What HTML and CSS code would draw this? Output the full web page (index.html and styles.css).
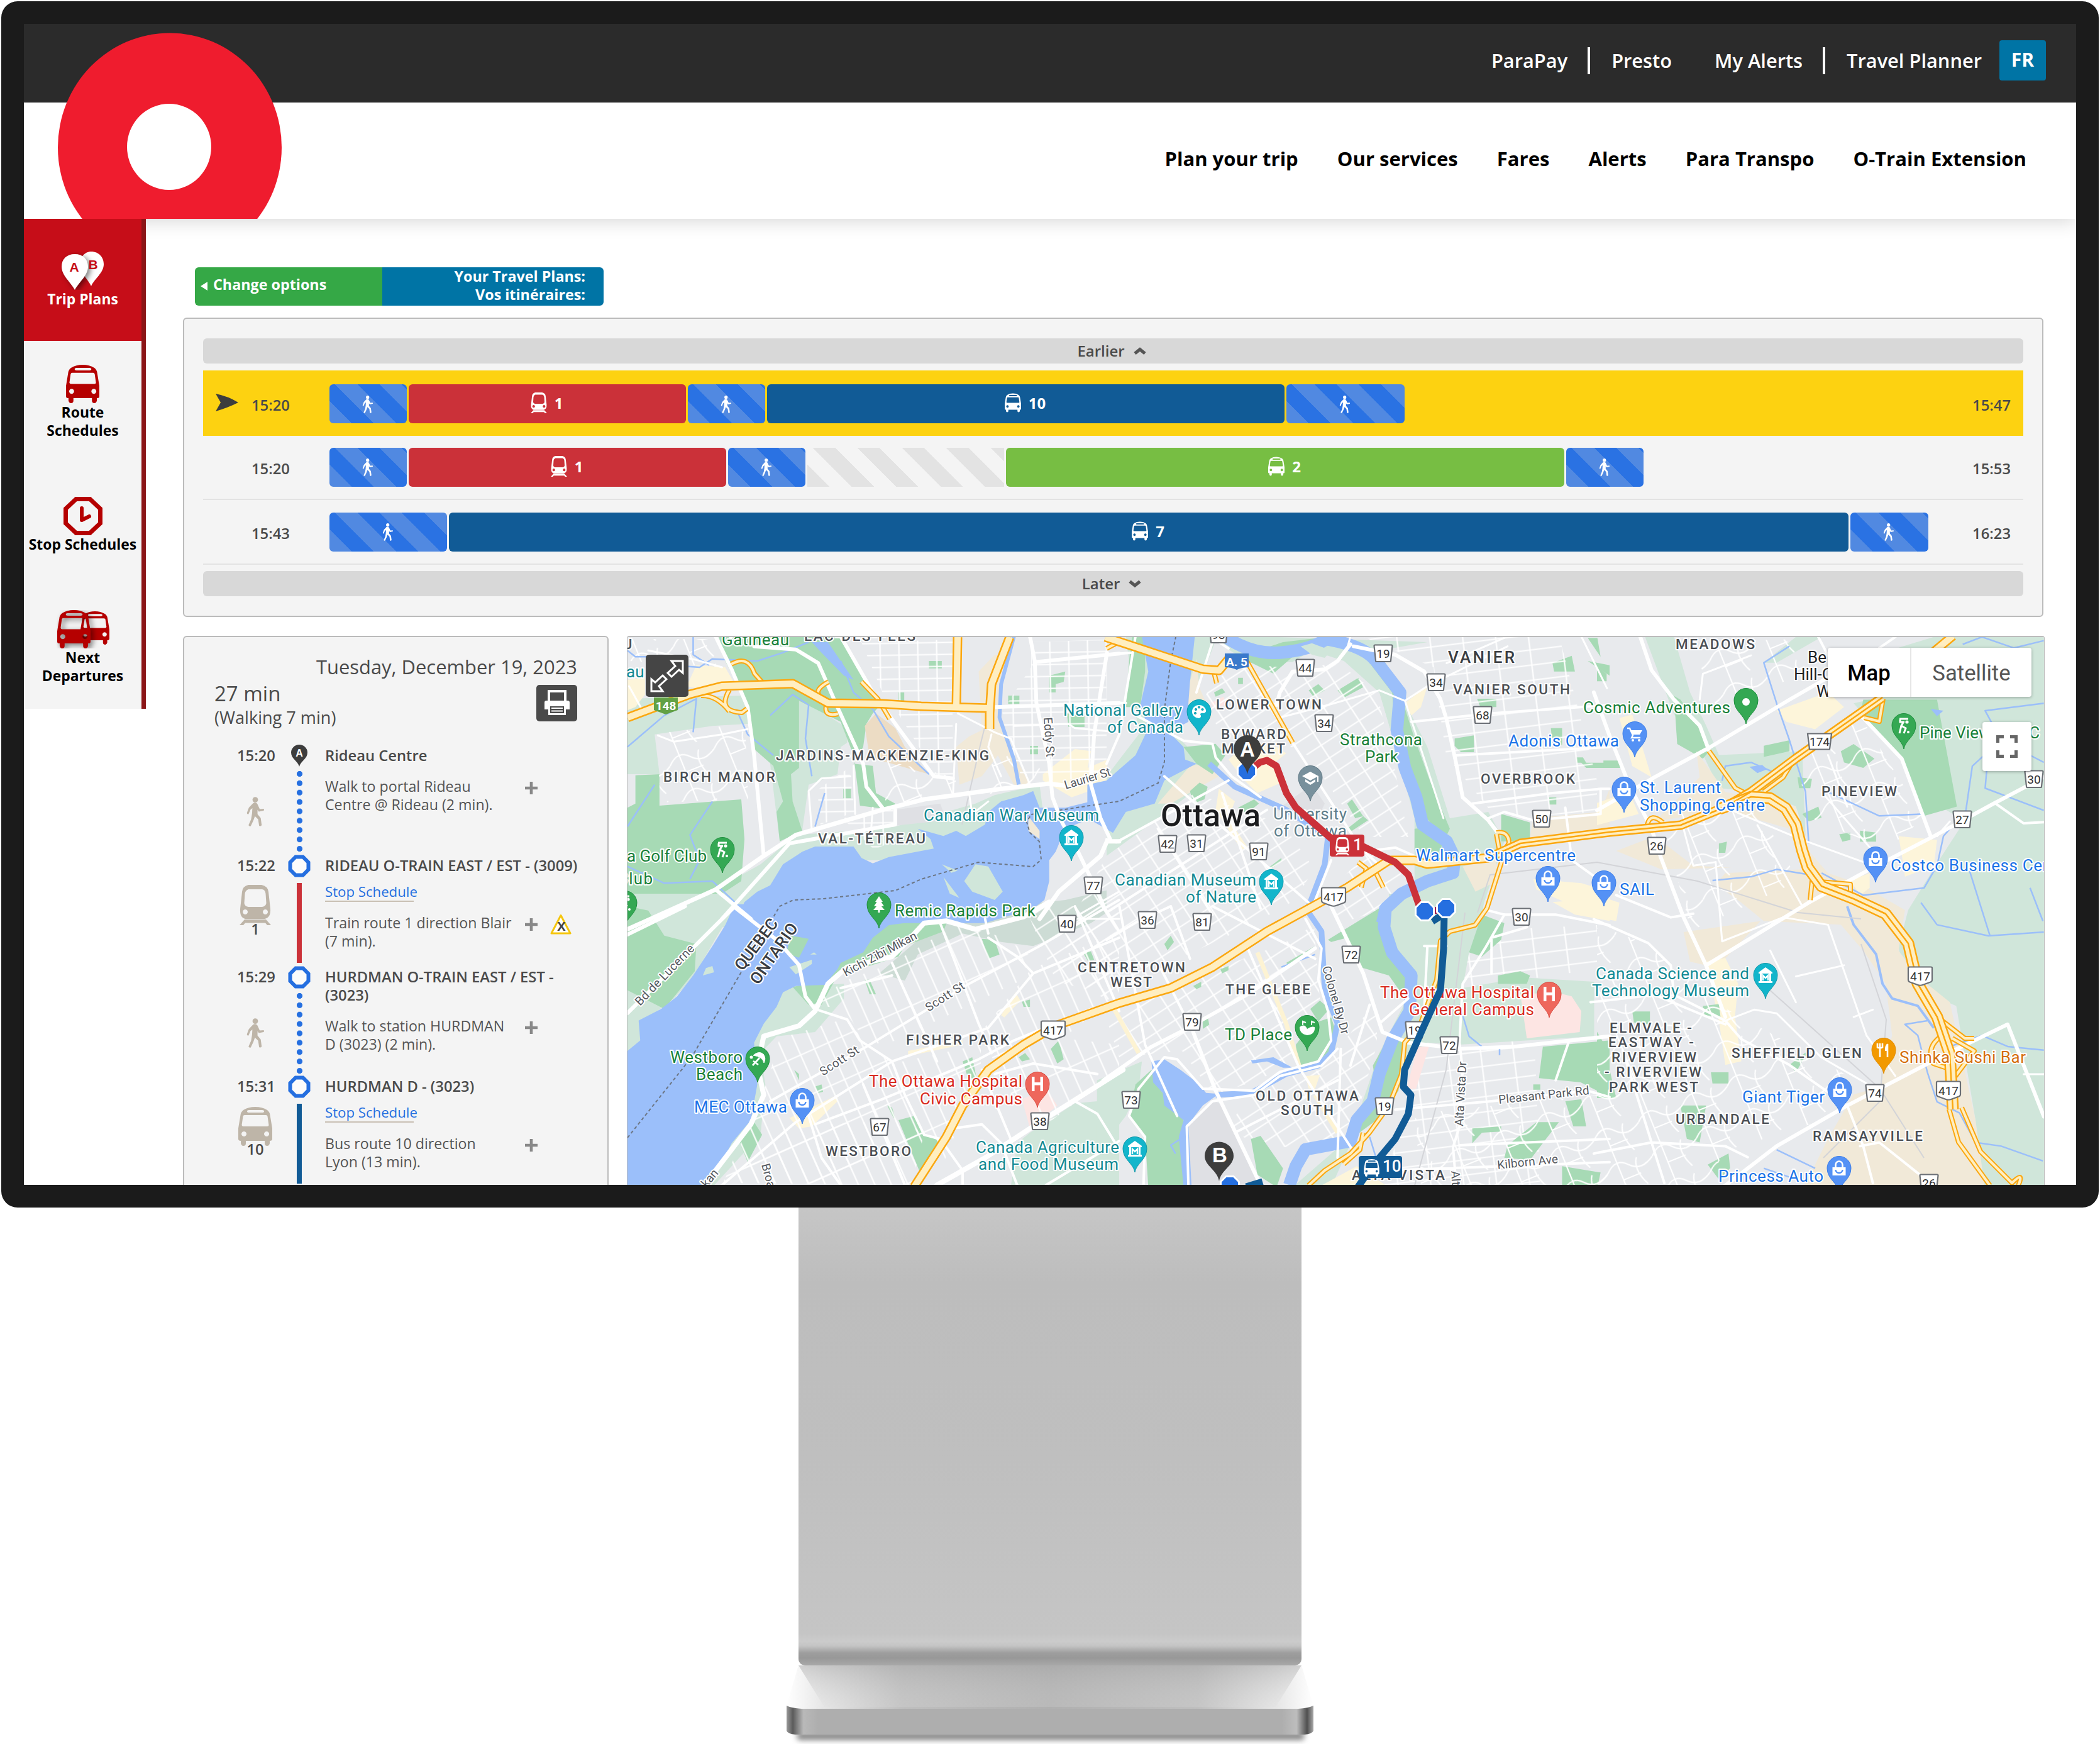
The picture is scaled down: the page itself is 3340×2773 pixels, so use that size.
FILE: index.html
```html
<!DOCTYPE html>
<html lang="en">
<head>
<meta charset="utf-8">
<title>Travel Planner</title>
<link rel="stylesheet" href="styles.css">
</head>
<body>
<svg class="defs" width="0" height="0" aria-hidden="true">
  <defs>
    <symbol id="i-walk" viewBox="0 0 28 46"><circle cx="13.500" cy="4.500" r="4.300"/><path d="M10 10 Q13 8 16.500 10.500 L20.500 19 L26.500 18.500 Q28 20 26.500 21.500 L19 23 L17 20 L17 27 L22 33 L23.500 44 Q22 46.500 19.500 45 L18 35 L13 30 L10.500 37 L6.500 45.500 Q4 46.500 3 44 L7 35 L8.500 26 L9 17.500 L6 20 L3 27 Q0.500 27.500 0.500 25 L3.500 17 Z"/></symbol>
    <symbol id="i-train" viewBox="0 0 50 64"><path fill-rule="evenodd" d="M14 0 H35 Q45 2 46 11 L49 38 Q50 52 40 54 H9 Q0 52 1 38 L4 11 Q5 2 14 0Z M14 7 Q9 9 8.500 14 L7.500 29 Q8 34 14 35 H36 Q42 34 42.500 29 L41.500 14 Q41 8 36 7Z M9 39 a4 4 0 1 0 .1 0Z M41 39 a4 4 0 1 0 .1 0Z"/><path d="M8 55 H42 L50 64 H44 L41 60.500 H9 L6 64 H0 Z M12 57 h26 v1.500 h-26z"/></symbol>
    <symbol id="i-bus" viewBox="0 0 54 62"><path fill-rule="evenodd" d="M8 5 Q16 0 27 0 T46 5 Q50 8 50.500 13 L54 34 V51 Q54 54 50 54 V58 Q49 62 46 62 Q42 62 42 58 V54 H12 V58 Q12 62 8 62 Q5 62 4 58 V54 Q0 54 0 51 V34 L3.500 13 Q4 8 8 5Z M17 5 Q14 5 14 7 T17 9 H38 Q41 9 41 7 T38 5Z M10 13 Q8 13 7.500 15 L5.500 29 Q6 31 8 31 H46 Q48.500 31 48.500 29 L46.500 15 Q46 13 44 13Z M9 39 a4 4 0 1 0 .1 0Z M45 39 a4 4 0 1 0 .1 0Z"/></symbol>
    <symbol id="i-octagon" viewBox="0 0 36 36"><path d="M12.200 3.500 H23.800 L32.500 12.200 V23.800 L23.800 32.500 H12.200 L3.500 23.800 V12.200Z" fill="#fbfbfb" stroke="#256fe0" stroke-width="6"/></symbol>
    <symbol id="i-plus" viewBox="0 0 20 20"><path d="M7.700 0h4.600v7.700h7.700v4.600h-7.700v7.700h-4.600v-7.700h-7.700v-4.600h7.700z"/></symbol>
    <symbol id="i-stop" viewBox="-18 -18 36 36"><path d="M-6.500 -16 H6.500 L16 -6.500 V6.500 L6.500 16 H-6.500 L-16 6.500 V-6.500Z" fill="#fff"/><path d="M-5.500 -13 H5.500 L13 -5.500 V5.500 L5.500 13 H-5.500 L-13 5.500 V-5.500Z" fill="#256fe0"/></symbol>
    <path id="pin" d="M0 0C-2 -14 -19 -20 -19 -37.500A19 19 0 0 1 19 -37.500C19 -20 2 -14 0 0Z"/>
    <g id="g-museum"><path d="M-11 -42 L0 -50 L11 -42 V-40 H-11Z M-9 -40 h3 v12 h-3z M6 -40 h3 v12 h-3z M-11 -28 h22 v3 h-22z" fill="#fff"/><path d="M-4 -29 V-37 L0 -33 L4 -37 V-29" fill="none" stroke="#fff" stroke-width="2.400"/></g>
    <g id="g-bag"><path d="M-10.500 -39 H10.500 V-26 H-10.500Z" fill="#fff"/><path d="M-5.500 -39 V-43 A5.500 5.500 0 0 1 5.500 -43 V-39" fill="none" stroke="#fff" stroke-width="2.600"/><path d="M-5.500 -35 A5.500 5 0 0 0 5.500 -35" fill="none" stroke="#4f8ff6" stroke-width="2.400"/></g>
    <g id="g-golf"><path d="M-7 -48H7M-6 -47V-43L1 -43M0 -44L-4 -37L3 -33L0 -25M-4 -37L-7 -25" fill="none" stroke="#fff" stroke-width="3"/><circle cx="5" cy="-43" r="2.600" fill="#fff"/><circle cx="7" cy="-27" r="2" fill="#fff"/></g>
    <g id="g-hosp"><path d="M-9 -49 h4.500 v9 h9 v-9 h4.500 v23 h-4.500 v-9.500 h-9 v9.500 h-4.500z" fill="#fff"/></g>
    <g id="g-tree"><path d="M0 -51 L6 -42 H3.500 L8 -35 H4 L9 -29 H1.500 V-25 H-1.500 V-29 H-9 L-4 -35 H-8 L-3.500 -42 H-6Z" fill="#fff"/></g>
    <path id="sh-county" d="M-14.500 -12 Q-14.500 -13.500 -13 -13.500 H13 Q14.500 -13.500 14.500 -12 L12 11.500 Q12 13 10.500 13 H-10.500 Q-12 13 -12 11.500Z"/>
    <path id="sh-prov" d="M-19 -13 Q-19 -14.500 -17 -14.500 H17 Q19 -14.500 19 -13 V6 Q19 9 15 10 L4 14 Q0 15.500 -4 14 L-15 10 Q-19 9 -19 6Z"/>
    <pattern id="st-core" width="36" height="24" patternUnits="userSpaceOnUse" patternTransform="rotate(-33)"><path d="M0 1.500H36M1.500 0V24" stroke="#fff" stroke-width="2.200"/></pattern>
    <pattern id="st-west" width="24" height="64" patternUnits="userSpaceOnUse" patternTransform="rotate(-24)"><path d="M0 1.500H24M1.500 0V64" stroke="#fff" stroke-width="2.200"/></pattern>
    <pattern id="st-east" width="52" height="24" patternUnits="userSpaceOnUse" patternTransform="rotate(-7)"><path d="M0 1.500H52M1.500 0V24" stroke="#fff" stroke-width="2.200"/></pattern>
    <pattern id="st-hull" width="30" height="19" patternUnits="userSpaceOnUse" patternTransform="rotate(-1)"><path d="M0 1.500H30M1.500 0V19" stroke="#fff" stroke-width="2.200"/></pattern>
    <pattern id="st-suburb" width="76" height="58" patternUnits="userSpaceOnUse" patternTransform="rotate(-22)"><path d="M0 20 Q20 0 36 18 T76 20 M20 0 V58 M52 12 Q40 30 54 58 M20 38 H50" fill="none" stroke="#fff" stroke-width="2.200"/></pattern>
    <linearGradient id="metal" x1="0" x2="1" y1="0" y2="0"><stop offset="0" stop-color="#999"/><stop offset=".012" stop-color="#5b5b5b"/><stop offset=".032" stop-color="#b9b9b9"/><stop offset=".06" stop-color="#aeaeae"/><stop offset=".94" stop-color="#aeaeae"/><stop offset=".968" stop-color="#bdbdbd"/><stop offset=".988" stop-color="#4f4f4f"/><stop offset="1" stop-color="#aaa"/></linearGradient>
    <linearGradient id="ledge" x1="0" x2="1" y1="0" y2="0"><stop offset="0" stop-color="#fff"/><stop offset=".07" stop-color="#e6e6e6"/><stop offset=".22" stop-color="#bfbfbf"/><stop offset=".5" stop-color="#b0b0b0"/><stop offset=".78" stop-color="#bfbfbf"/><stop offset=".93" stop-color="#e6e6e6"/><stop offset="1" stop-color="#fff"/></linearGradient>
    <linearGradient id="ledge-fade" x1="0" x2="0" y1="0" y2="1"><stop offset="0" stop-color="#a8a8a8" stop-opacity=".5"/><stop offset="1" stop-color="#ddd" stop-opacity=".2"/></linearGradient>
  </defs>
</svg>

<div class="monitor">
  <div class="screen">
    <header class="header">
      <nav class="topbar">
        <a class="divided">ParaPay</a><a class="presto">Presto</a><a class="divided alerts">My Alerts</a><a class="planner">Travel Planner</a><a class="lang">FR</a>
      </nav>
      <nav class="mainnav">
        <a>Plan your trip</a><a>Our services</a><a>Fares</a><a>Alerts</a><a>Para Transpo</a><a>O-Train Extension</a>
      </nav>
      <svg class="logo" viewBox="0 0 356 295"><ellipse cx="178" cy="182" rx="178" ry="182" fill="#ef1c2e"/><ellipse cx="177" cy="181" rx="67" ry="68.500" fill="#fff"/></svg>
    </header>

    <div class="page">
      <aside class="sidebar">
        <a class="side-item active">
          <svg width="70" height="61" viewBox="0 0 70 61"><path d="M48 0 C60 0 68 9 68 20 C68 34 54 42 48 55 C42 42 30 34 30 20 C30 9 38 0 48 0Z" fill="#fff"/><path d="M22 4 C35 4 43 12 43 24 C43 38 29 48 22 61 C15 48 1 38 1 24 C1 12 9 4 22 4Z" fill="#fff" class="lifted"/><text x="21" y="32" class="ab">A</text><text x="51" y="28" class="ab">B</text></svg>
          <span>Trip Plans</span>
        </a>
        <a class="side-item"><svg width="53" height="61" class="red"><use href="#i-bus"/></svg><span>Route Schedules</span></a>
        <a class="side-item"><svg width="62" height="61" viewBox="0 0 62 61"><path d="M20 3.500 H42 L58.500 19 V42 L42 57.500 H20 L3.500 42 V19Z" fill="none" stroke="#b50000" stroke-width="7"/><path d="M29 18 V37 L41 31" fill="none" stroke="#b50000" stroke-width="6" stroke-linecap="round" stroke-linejoin="round"/></svg><span class="nowrap">Stop Schedules</span></a>
        <a class="side-item"><svg width="84" height="61" viewBox="0 0 84 61" class="red"><use href="#i-bus" x="38" y="2" width="46" height="53"/><use href="#i-bus" x="1" y="0" width="53" height="61" class="lifted"/></svg><span>Next Departures</span></a>
      </aside>

      <main class="main">
        <div class="titlebar">
          <a class="change"><i class="tri"></i>Change options</a>
          <div class="plans">Your Travel Plans:<br>Vos itinéraires:</div>
        </div>

        <section class="panel results">
          <div class="more">Earlier<svg width="20" height="12" viewBox="0 0 20 12"><path d="M2 10 L10 3.500 L18 10" /></svg></div>
          <div class="trip selected">
            <svg class="arrow" width="36" height="28" viewBox="0 0 36 28"><path d="M0 0 Q20 4 36 14 Q20 22 0 28 L8 14Z" fill="#3d3d3d"/></svg>
            <time class="from">15:20</time>
            <div class="track">
              <div class="seg walk" style="width:123px"><svg><use href="#i-walk"/></svg></div>
              <div class="seg r1" style="width:441px"><svg><use href="#i-train"/></svg>1</div>
              <div class="seg walk" style="width:123px"><svg><use href="#i-walk"/></svg></div>
              <div class="seg r10" style="width:823px"><svg><use href="#i-bus"/></svg>10</div>
              <div class="seg walk" style="width:188px"><svg><use href="#i-walk"/></svg></div>
            </div>
            <time class="to">15:47</time>
          </div>
          <div class="trip">
            <span class="arrow"></span>
            <time class="from">15:20</time>
            <div class="track">
              <div class="seg walk" style="width:123px"><svg><use href="#i-walk"/></svg></div>
              <div class="seg r1" style="width:505px"><svg><use href="#i-train"/></svg>1</div>
              <div class="seg walk" style="width:123px"><svg><use href="#i-walk"/></svg></div>
              <div class="seg wait" style="width:313px"></div>
              <div class="seg r2" style="width:888px"><svg><use href="#i-bus"/></svg>2</div>
              <div class="seg walk" style="width:123px"><svg><use href="#i-walk"/></svg></div>
            </div>
            <time class="to">15:53</time>
          </div>
          <div class="trip">
            <span class="arrow"></span>
            <time class="from">15:43</time>
            <div class="track">
              <div class="seg walk" style="width:187px"><svg><use href="#i-walk"/></svg></div>
              <div class="seg r10" style="width:2226px"><svg><use href="#i-bus"/></svg>7</div>
              <div class="seg walk" style="width:124px"><svg><use href="#i-walk"/></svg></div>
            </div>
            <time class="to">16:23</time>
          </div>
          <div class="more later">Later<svg width="20" height="12" viewBox="0 0 20 12"><path d="M2 2.500 L10 9 L18 2.500" /></svg></div>
        </section>

        <div class="lower">
          <section class="panel itinerary">
            <div class="date">Tuesday, December 19, 2023</div>
            <div class="summary">
              <div class="duration"><strong>27 min</strong><span>(Walking 7 min)</span></div>
              <a class="print"><svg width="40" height="42" viewBox="0 0 40 42"><path d="M7 18 V2 H33 V18" fill="none" stroke="#fff" stroke-width="4"/><path d="M3 17 H37 Q40 17 40 20 V31 H34 V40 H6 V31 H0 V20 Q0 17 3 17Z" fill="#fff"/><path d="M9 26 H31 V37 H9Z" fill="#4a4a4a"/><path d="M11 29 H29 M11 33.500 H29" stroke="#fff" stroke-width="1.800"/></svg></a>
            </div>
            <ol class="steps">
              <li class="step s1">
                <time>15:20</time>
                <div class="rail"><svg class="node" width="26" height="35" viewBox="0 0 26 35"><path d="M13 35 C11 26 0 23 0 12.500 A13 12.500 0 0 1 26 12.500 C26 23 15 26 13 35Z" fill="#3d3d3d"/><text x="13" y="18.500" class="node-letter">A</text></svg><div class="dots"></div></div>
                <div class="body"><h3>Rideau Centre</h3><p>Walk to portal Rideau<br>Centre @ Rideau (2 min).<svg class="plus" width="20" height="20"><use href="#i-plus"/></svg></p></div>
                <div class="mode"><svg width="29" height="47"><use href="#i-walk"/></svg></div>
              </li>
              <li class="step s2">
                <time>15:22</time>
                <div class="rail"><svg class="node" width="36" height="36"><use href="#i-octagon"/></svg><div class="line l1"></div></div>
                <div class="body"><h3>RIDEAU O-TRAIN EAST / EST - (3009)</h3><a class="stop">Stop Schedule</a><p>Train route 1 direction Blair<br>(7 min).<svg class="plus" width="20" height="20"><use href="#i-plus"/></svg><svg class="warn" width="34" height="33" viewBox="0 0 34 33"><path d="M17 2.500 L32 31 H2Z" fill="#fff" stroke="#f5c60e" stroke-width="3" stroke-linejoin="round"/><text x="18" y="27">x</text></svg></p></div>
                <div class="mode"><svg width="50" height="64"><use href="#i-train"/></svg><b>1</b></div>
              </li>
              <li class="step s3">
                <time>15:29</time>
                <div class="rail"><svg class="node" width="36" height="36"><use href="#i-octagon"/></svg><div class="dots"></div></div>
                <div class="body"><h3>HURDMAN O-TRAIN EAST / EST -<br>(3023)</h3><p>Walk to station HURDMAN<br>D (3023) (2 min).<svg class="plus" width="20" height="20"><use href="#i-plus"/></svg></p></div>
                <div class="mode"><svg width="29" height="47"><use href="#i-walk"/></svg></div>
              </li>
              <li class="step s4">
                <time>15:31</time>
                <div class="rail"><svg class="node" width="36" height="36"><use href="#i-octagon"/></svg><div class="line l10"></div></div>
                <div class="body"><h3>HURDMAN D - (3023)</h3><a class="stop">Stop Schedule</a><p>Bus route 10 direction<br>Lyon (13 min).<svg class="plus" width="20" height="20"><use href="#i-plus"/></svg></p></div>
                <div class="mode"><svg width="54" height="62"><use href="#i-bus"/></svg><b>10</b></div>
              </li>
            </ol>
          </section>

          <section class="map">
            <svg class="canvas" width="2253" height="872" viewBox="998 1012 2253 872">
              <rect x="990" y="1000" width="2270" height="900" fill="#e8eaed"/>

              <!-- north-west: Hull -->
              <g class="tile" transform="translate(980 1000) scale(.5102 .33333)">
                <polygon class="lg" points="100,1420 310,1240 450,1120 560,980 740,960 870,940 1120,830 1180,790 1320,740 1330,860 1000,1100 600,1100 370,1420"/>
                <polygon class="lg" points="35,330 250,320 560,310 720,470 720,540 700,560 690,690 600,740 580,960 510,1010 480,640 465,445 300,460 120,500 135,690 35,690"/>
                <polygon class="dg" points="320,33 700,33 780,250 830,350 800,400 780,450 770,560 740,640 800,650 810,780 870,830 860,860 760,840 740,600 700,440 570,340 570,660 545,690 550,820 580,960 510,1010 500,870 520,820 490,650 430,570 400,330 340,150"/>
                <polygon class="dg" points="60,695 135,690 135,840 390,810 400,1000 390,1200 330,1260 35,1400 35,850 60,830"/>
                <polygon class="sand2" points="775,460 810,400 870,470 900,560 975,690 790,610"/>
                <polygon class="sand" points="1130,200 1180,120 1215,120 1190,330 1200,480 1290,740 1240,740 1190,600 1140,700 1070,740 1060,560 1100,510 1140,480"/>
                <polygon class="yel" points="220,270 250,170 340,180 370,260 290,290"/><polygon class="yel" points="35,240 90,230 90,310 60,370 35,385"/>
                <polygon class="yel" points="1330,690 1430,570 1480,580 1470,660 1530,620 1530,740 1420,800 1330,720"/>
                <path class="dg" d="M975 150h40v35h-40zM880 300h18v45h-18zM1222 315h35v40h-35zM1350 220l50-20-5 50-25 10v40h-20zM1405 400l55 10v55h-50zM708 760h24v45h-24zM1290 555h25v40h-25z"/>
                <polygon class="grey2" points="870,860 1010,830 1030,910 870,935"/>
              </g>
              <g fill="url(#st-hull)">
                <polygon points="1370,1020 1518,1016 1518,1118 1410,1116"/><polygon points="1425,1128 1515,1130 1516,1235 1490,1232"/><polygon points="1594,1130 1640,1060 1640,1020 1760,1016 1760,1230 1690,1240 1625,1235 1600,1170"/><polygon points="1300,1255 1350,1220 1360,1290 1305,1310"/><polygon points="1340,1300 1420,1285 1425,1335 1390,1350"/>
              </g>
              <g fill="url(#st-suburb)"><polygon points="1045,1165 1185,1150 1190,1270 1050,1275"/><polygon points="1395,1205 1520,1235 1520,1262 1410,1280"/><polygon points="1540,1235 1640,1180 1660,1240 1560,1265"/><polygon points="1000,1015 1140,1015 1150,1060 1000,1050"/></g>

              <!-- south-west: Westboro -->
              <g class="tile" transform="translate(980 1440) scale(.5102 .33333)">
                <polygon class="lg" points="35,-60 420,-60 370,0 300,180 240,340 180,440 75,560 80,640 35,700"/>
                <polygon class="dg" points="35,0 100,20 150,140 250,180 245,310 150,490 35,400"/>
                <polygon class="lg2" points="1040,30 1400,-30 1568,-90 1568,-10 1480,80 1300,190 1200,170 1080,130 940,230 900,355 820,320"/>
                <polygon class="lg" points="510,400 560,380 710,370 710,440 620,600 500,620 450,700 465,850 450,1090 300,1340 280,1340 420,900 420,620"/>
                <polygon class="dg" points="700,270 800,80 900,60 1030,80 1020,120 900,190 880,240 820,270 690,330 640,470 600,470 550,385 600,370 680,260"/>
                <path class="dg" d="M1140 155l40 5 15 70-35 20zM775 350h15l20 70h-20zM880 1020l50-20 30 90 50 30-25 90-35 70zM1080 740l30-20 15 110-30-20zM1355 680l25-40 15 90-20 20zM380 1110l50-80 25 60-45 130zM1255 720l20-20 15 30-25 10zM555 780l15 50v-30zM620 860l20-10 5 35-15 5zM1265 455l25-10v35h-20zM845 950l20 60 5 0-10-50zM1455 220l25-5 10 40-20 5z"/>
                <polygon class="lg" points="1230,1340 1250,1130 1290,1080 1430,940 1500,930 1510,840 1568,780 1568,1340"/>
                <polygon class="pink" points="1265,920 1340,870 1375,950 1290,1060"/>
                <polygon class="yel" points="540,1010 690,900 690,930 610,1050 570,1060"/><polygon class="yel" points="1200,520 1245,410 1260,450 1210,530"/><polygon class="yel" points="910,690 1080,640 1080,660 910,715"/>
              </g>
              <g fill="url(#st-west)">
                <polygon points="1290,1600 1340,1560 1420,1530 1520,1470 1600,1490 1640,1520 1620,1560 1420,1655 1380,1660 1340,1600"/>
                <polygon points="1220,1720 1240,1650 1340,1620 1420,1690 1560,1660 1560,1700 1500,1850 1470,1800 1300,1880 1150,1880"/>
                <polygon points="1560,1640 1640,1540 1780,1480 1780,1580 1690,1650 1780,1660 1780,1700 1660,1790 1600,1730"/>
                <polygon points="1160,1880 1250,1790 1430,1780 1470,1800 1450,1884"/>
              </g>

              <!-- centre north: downtown -->
              <g class="tile" transform="translate(1760 1000) scale(.5102 .33333)">
                <polygon class="lg" points="60,33 480,33 1000,60 850,100 1000,560 1070,900 1190,870 1240,1010 1160,1380 860,1380 960,1200 950,940 900,560 850,300 700,150 440,160 340,50 280,300 260,400 200,480 340,690 180,880 0,1080 0,700 100,500"/>
                <polygon points="400,330 380,100 530,200 640,100 740,150 850,300 900,560 960,900 960,1200 860,1380 0,1380 0,1080 180,880 340,690 250,560 300,300" fill="#e8eaed"/>
                <polygon class="sand" points="250,300 280,140 290,280 330,420 250,350"/><polygon class="sand" points="160,830 260,650 310,640 350,700 200,830"/>
                <polygon class="dg" points="80,33 120,33 120,200 105,370 60,370 70,150"/>
                <polygon class="dg" points="430,120 550,60 700,33 580,130 520,210 440,150"/>
                <polygon class="dg" points="240,560 340,545 370,600 330,690 280,640"/>
                <polygon class="dg" points="800,120 870,160 910,280 960,520 1010,730 1070,950 1030,1080 960,1050 960,950 1020,940 975,860 940,700 900,500 890,300"/>
                <path class="dg" d="M630 290l30-30 20 30-35 30zM720 290l65-60 15 45-60 50zM335 300l25-20 10 20-30 20zM410 230h15v30h-15zM260 770l30-40 25 20-10 60-35 20zM410 850l50-40 15 20-40 50zM750 830l15-20 35 80-25 10zM750 950l50-60 15 20-50 50zM510 1130l35-40v15l-30 35zM1390 160l60-35 10 75-65 0zM1155 330h60v40h-50zM1385 470h35v80h-30zM1085 520l60-15v80h-40l-20-30zM1230 880l90 40v90h-90zM1380 800h22v35h-22zM1465 610h20l10 25h73v25h-73l-15-25h-15zM1500 150l68 20v50zM1500 40h30l10 90z"/>
                <polygon class="yel" points="380,620 440,540 530,560 560,590 520,640 560,720 470,780 430,720"/><polygon class="yel" points="930,350 1000,270 980,370 950,410"/><polygon class="yel" points="350,760 400,820 380,900 440,1040 420,1050 340,860"/>
                <polygon class="sand" points="1330,900 1540,870 1568,760 1568,960 1320,990"/><polygon class="sand" points="1110,1130 1210,1090 1230,1190 1150,1250"/><polygon class="yel" points="1330,1190 1480,1210 1568,1250 1568,1370 1500,1350 1340,1240"/>
                <polygon class="grey2" points="530,860 640,740 680,830 640,960"/><polygon class="pink" points="325,350 365,320 370,360 335,375"/>
              </g>
              <g fill="url(#st-core)">
                <polygon points="1930,1080 1980,1055 2040,1060 2130,1055 2190,1100 2220,1230 2240,1330 2170,1330 2080,1200 2040,1180 1950,1170 1910,1120"/>
                <polygon points="1760,1360 1900,1260 2040,1310 2090,1380 2060,1430 1990,1470 1860,1530 1760,1590 1690,1540 1700,1470"/>
                <polygon points="2140,1390 2190,1340 2240,1400 2220,1440 2120,1470"/>
                <polygon points="1760,1620 1880,1560 2040,1500 2090,1470 2100,1600 2050,1630 2060,1690 1990,1720 1930,1740 1880,1670 1780,1680"/>
                <polygon points="1950,1790 2010,1720 2100,1700 2190,1590 2190,1660 2150,1800 2130,1830 2010,1820 1960,1800"/>
                <polygon points="1630,1440 1780,1440 1760,1580 1680,1560"/>
              </g>
              <g fill="url(#st-east)">
                <polygon points="2170,1012 2480,1012 2540,1240 2540,1290 2380,1300 2300,1200 2280,1060"/>
                <polygon points="2260,1670 2440,1640 2450,1884 2200,1884 2240,1750"/>
                <polygon points="2320,1480 2540,1470 2540,1540 2330,1570"/>
              </g>

              <!-- centre south: Glebe, Alta Vista -->
              <g class="tile" transform="translate(1760 1440) scale(.5102 .33333)">
                <polygon class="lg" points="880,-60 1180,-60 1170,50 1130,220 1110,390 1300,340 1520,360 1520,620 1100,660 1000,650 950,700 850,1010 770,1100 700,1340 580,1340 760,1100 850,700 950,400 880,180"/>
                <polygon class="dg" points="690,160 860,0 850,100 890,220 940,330 940,460 880,330 790,290 750,150 700,170"/>
                <polygon class="dg" points="830,760 870,650 930,640 910,880 850,1010 770,1100 840,850"/>
                <path class="dg" d="M1360 670l208-30v270l-90-70-130-20zM1410 1030l-90 180-80-10 10-60 90-110zM1430 930l50-10 15 130h-40zM1420 1240l120 30-10 70h-110zM1130 220l40-180 70 40-10 80-60 80zM1140 1060l90-10v25l-60 5-30 50zM590 660l50-100 60-30 20 90-30 80-40 50-55 10zM635 490l30-40 30 40-35 60zM450 1110l30-15 70 155-20 90-60-60zM1220 330l70-20 30 20-10 40h-90zM180 180l20-40 10 30-20 40zM300 540l15-15 5 40-20 20zM355 300l25-15v20l-20 15zM270 380l25-20v25l-15 10zM1330 850h22v25h-22zM560 270l90-80v15l-80 80z"/>
                <polygon class="lg" points="-30,830 110,740 100,870 60,1000 -30,1180"/>
                <polygon class="dg" points="90,850 140,780 150,840 240,1020 255,1340 130,1340 120,1100 70,1000"/>
                <polygon class="grey2" points="255,1050 330,920 370,960 480,1340 265,1340"/>
                <polygon class="pink" points="1290,420 1400,410 1450,430 1480,500 1475,600 1310,630"/><polygon class="pink" points="970,670 1005,670 965,870 935,870"/>
                <polygon class="yel" points="660,1340 780,1240 880,1340"/><polygon class="yel" points="620,810 665,805 650,870 630,870"/><polygon class="yel" points="1390,-20 1568,-40 1568,70 1460,40"/><path d="M470 220L560 560 600 760M20 480L100 700M650 900L720 1080" fill="none" stroke="#fdf3d3" stroke-width="7" vector-effect="non-scaling-stroke"/>
              </g>

              <!-- east -->
              <g class="tile" transform="translate(2540 1000) scale(.5102 .5867)">
                <polygon class="lg" points="1400,20 1400,1520 1200,1520 1180,1330 1120,1020 960,960 940,860 970,760 1070,620 1130,540 1110,500 1030,460 950,330 850,250 800,200 900,180 900,60 1050,20"/>
                <polygon class="lg" points="150,20 240,20 290,170 340,260 380,340 640,330 650,560 620,480 520,440 380,430 320,320 240,230"/>
                <polygon class="lg" points="520,90 620,20 700,20 560,90"/>
                <polygon class="dg" points="830,190 1060,190 1122,480 1020,505 950,350 820,230"/>
                <polygon class="dg" points="240,180 260,190 320,260 350,330 330,350 250,310"/>
                <polygon class="sand" points="310,330 400,440 620,480 640,580 720,660 820,690 960,760 940,870 1000,940 1100,1010 1180,1330 1210,1520 640,1520 720,1380 800,1260 880,1240 920,1100 900,960 830,870 760,800 520,790 450,740 370,690 400,660 640,650 600,540 400,490 180,520 320,400"/>
                <polygon class="sand" points="60,600 180,560 300,640 420,645 200,650"/><polygon class="sand" points="270,820 510,790 380,910 340,910 290,900"/>
                <path class="yel" d="M560 220l160-50 50 40-90 60-90-20zM940 560l120 10-10 70-90 30-10-60zM70 240l40-10 60 170-60-30zM0 470l100-30 30 60-130 30zM340 900l60-10 40 70-10 90 20 120-50 10-20-120zM0 720l70 20-10 50-60-10zM790 680l60-20v40l-30 20z"/>
                <path class="dg" d="M330 1020l50-5 5 35-50-5zM355 1200h55v30h-50zM260 1290h80l-20 100-40-10zM345 1450l65-30 5 40-35 30zM0 1090l20 30 40 150h-60zM110 1035h55v35l-50-5zM760 330l40-20 65 40-35 25-60-15zM820 545l50 5v25l-50 0zM625 400l45 5-5 25-35 0zM640 500l50-20 10 30-40 10zM600 1180l60-40-40 60zM380 580l25-5-5 30h-20zM520 315l80-15v30l-80 15zM755 555l35-5v20l-25 5zM20 355h55v20h-55zM0 100l30 20v20h-30z"/>
                <path fill="#9bbffa" d="M475 372l40-5 15 12-30 10zM1040 215l40 5-20 15z"/>
              </g>
              <g fill="url(#st-suburb)">
                <polygon points="2690,1020 2860,1015 2870,1060 2740,1150"/><polygon points="2850,1190 2960,1140 3060,1300 3000,1350 2880,1300"/>
                <polygon points="2540,1470 2620,1500 2740,1600 2940,1710 2900,1780 2740,1830 2720,1884 2540,1884"/><polygon points="2640,1290 2800,1290 2860,1400 2690,1480"/>
                <polygon points="2250,1770 2540,1740 2560,1884 2260,1884"/>
              </g>

              <!-- water -->
              <g class="tile" transform="translate(980 1000) scale(.5102 .33333)">
                <polygon class="water" points="370,1400 400,1300 440,1250 480,1220 520,1120 580,1060 620,1035 740,1035 765,1090 800,1115 850,1085 990,1045 980,1000 940,950 1020,985 1060,960 1090,985 1150,930 1160,870 1200,820 1270,790 1300,770 1320,850 1400,850 1480,820 1490,770 1620,720 1620,840 1540,890 1480,900 1400,950 1370,1060 1350,1100 1350,1200 1335,1290 1300,1330 1150,1400"/>
                <path class="lg" d="M1120 1120l40 10 45 120-25 40-70-40-25-50zM1015 1120l50 30-20 10zM1020 1180l50 100-30-20z"/><polygon class="sand" points="1285,890 1320,960 1320,1000 1285,960"/>
                <path class="water" d="M610 60l50 0 80 180-30-20-70-110z"/>
                <path class="creek" d="M35 100L60 130 140 130 170 170 260 180 300 140 440 150 520 110 600 60M240 33L240 120 290 170M35 560L150 410 250 330 240 490M480 410L550 310 600 360 590 520 610 700M700 150L740 300 800 380 850 510 975 690M380 400L410 500 490 600M120 740L35 940M300 820L230 980 260 1100 230 1190M35 1130L150 1210 300 1200 370 1300M650 780L620 940"/>
                <path d="M1240 33L1200 260 1195 420 1240 620 1255 740" class="creek wide"/>
              </g>
              <g class="tile" transform="translate(980 1440) scale(.5102 .33333)">
                <polygon class="water" points="370,-10 1180,-10 1130,80 1050,40 950,70 850,90 800,150 770,220 700,270 690,300 650,375 560,380 520,410 500,480 460,560 430,650 440,850 420,1020 360,1130 290,1340 30,1340 35,690 75,640 70,545 140,490 190,430 240,330 300,190 340,90"/>
                <path class="dg" d="M545 140l55 15-30 90-40-20z"/><path class="lg" d="M270 330l10-35 20-10 5 30zM540 290l70-35v20l-50 50zM605 230l12-10 8 10z"/>
              </g>
              <g class="tile" transform="translate(1760 1000) scale(.5102 .33333)">
                <polygon class="water" points="110,33 275,33 260,250 255,350 255,440 195,490 240,560 245,620 280,640 180,720 150,830 60,870 20,970 -60,900 -60,740 0,720 90,600 130,470 105,360 130,200"/>
                <path class="river" d="M370 33Q450 120 540 110 T680 50"/><path class="river" d="M660 40Q800 70 840 150 T915 300L905 480 930 660 965 800 985 930 1060 1010 1085 1090 1080 1160 1000 1200 920 1260 870 1330 860 1400"/>
                <polygon class="lg" points="605,80 640,65 700,100 680,135 640,120"/>
                <path class="canal" d="M320 640L400 750 560 860 690 990 680 1120 630 1320"/>
              </g>
              <g class="tile" transform="translate(1760 1440) scale(.5102 .33333)">
                <path class="river" d="M870 0L865 100 890 220 950 330 945 500 890 640 850 800 830 930 780 1020 760 1120 620 1160 590 1240 570 1330"/>
                <path class="canal" d="M630 30L670 120 680 400 720 560 700 700 660 760 560 800 500 850 450 890 340 900"/>
                <polygon class="water" points="140,740 180,730 230,780 290,850 310,890 350,895 300,950 255,1040 265,1340 240,1340 225,1100 240,1020 180,950 175,890 145,840"/>
                <path class="water" d="M450 735l70-15 60 50-30 0-50-30-45 10z"/><path class="creek" d="M1100 470L1130 620 1170 670M1225 680V710M545 290L650 230M820 1100L850 1250M240 1100L200 1140 215 1180"/>
              </g>
              <g class="tile" transform="translate(2540 1000) scale(.5102 .5867)">
                <path class="creek wide2" d="M780 750L800 800 870 880 890 960 920 1000 1000 1020 1050 1080"/>
                <path class="creek" d="M1030 1060L960 1070 1000 1100 1030 1200 1060 1280 1130 1310 1180 1390 1260 1400 1390 1440M1393 490L1210 430 1220 330 1170 370 1150 490 1080 560 1060 640 1020 700 830 720 700 660M1010 740L1060 800 1220 830 1393 820M1160 650L1225 830M1350 700L1390 790M360 680L480 670 560 650 700 670M600 45L520 90 560 200 600 300 650 440 660 580M560 1410L680 1460M520 1460L620 1490M1140 40L1200 20 1300 50 1393 30M1393 200L1210 220 1260 300 1393 360M1100 1130L1200 1100 1280 1130 1393 1140M720 440L880 505 1020 500M390 410L400 370 480 360 560 390"/>
              </g>

              <!-- rail, borders -->
              <g class="rail-lines">
                <path d="M1600 1020L1560 1180 1530 1310M2330 1450L2300 1700 2250 1884M2350 1450L2370 1390 2540 1370 2700 1400 2860 1450 2960 1460M2800 1560L2990 1730 3060 1840M2960 1500L3000 1620 2990 1750 2900 1840"/>
              </g>
              <g class="borderline">
                <path d="M998 1808L1100 1680 1240 1440 1262 1430 1310 1428 1424 1415 1465 1397 1556 1370 1643 1377 1656 1366 1653 1337 1638 1323 1633 1306 1640 1294 1780 1273 1842 1244 1852 1210 1852 1127 1862 1050 1870 1012"/>
              </g>

              <!-- roads -->
              <g class="roads" transform="translate(980 1000) scale(.5102 .33333)">
                <path class="w6" d="M310 33L360 190 410 370 430 600 460 1080M700 33L800 300 880 470 990 700 1050 710M430 80L560 95 630 160 690 370 770 640 780 750 830 850"/>
                <path class="w7" d="M35 1430L310 1240 460 1080 560 980 830 860 960 810 1200 760 1350 735 1400 745"/>
                <path class="w6" d="M310 1240L420 1380M330 1380L540 1020 870 930 870 860M1290 33L1305 150 1310 350 1350 640 1360 800 1390 920 1440 1060 1500 1250 1520 1320M1305 155L1568 115M1180 370L1568 350M1530 110L1510 300 1490 500 1480 740 1510 900 1540 1000"/>
                <path class="w7" d="M1568 1010L1530 1010 1510 1080 1380 1250 1320 1380"/>
                <path class="w4" d="M1065 400L1180 490 1230 520 1290 740M100 100L250 145 330 180M40 270L80 380 35 400M130 505L180 535 330 500 410 475M1240 460L1410 450 1430 470 1568 490M1060 450L1050 790M740 650L745 880M610 960L600 770 640 710 730 700M800 850L795 950M1100 780L1110 880 1160 820M1568 1380L1420 1380 1568 1250M1170 500L1160 560 1200 700"/>
              </g>
              <g class="roads" transform="translate(980 1440) scale(.5102 .33333)">
                <path class="w6" d="M35 135L215 0M35 510L370 0M365 0L500 160 570 280 590 430 620 490"/>
                <path class="w8" d="M1350 -20L1270 50 1120 110 1030 70 960 80 900 180 860 240 720 290 660 370 620 500 570 570 460 620 440 760 460 900 420 1040 330 1220 270 1340"/>
                <path class="w5" d="M480 930L780 670 1100 370 1320 190 1568 -30M330 1330L560 1030 860 740 1160 580 1300 320 1568 150M620 490L720 540 760 640 860 740 900 900 960 1090 1010 1110 1080 1260 1080 1330"/>
                <path class="w8" d="M1000 1330L1150 1200 1320 1030 1580 780"/>
                <path class="w5" d="M600 1000L640 1200 700 1330M620 1040L830 920 1130 730 1240 640 1480 490M1010 80L1130 560 1170 700M860 270L1000 740M1050 1060L1140 1040 1200 1130 1250 1330M770 850L900 1330M1140 780L1230 1110M1160 130L1150 60M1430 0L1568 500M1180 800L1300 750 1500 800M1340 1330L1568 1120M1430 930L1500 990 1568 1160M1520 0L1568 120M1160 150L1250 240 1300 320M700 390L860 330"/>
              </g>
              <g class="roads" transform="translate(1760 1000) scale(.5102 .33333)">
                <path class="w5" d="M90 33L40 500 0 640M0 120L80 110M0 350L60 350M330 60L280 300M340 50L380 90M80 400L240 530 330 545M330 545L340 610 390 700 480 800"/>
                <path class="w6" d="M760 70L720 150 680 190 580 200 540 300 530 360M770 80L900 120 990 200 1040 330 1060 430 1090 640 1110 800 1190 910 1220 970"/>
                <path class="w4" d="M540 420L690 360 850 290 930 340 1000 270 1250 80M930 340L980 570 1050 900M750 90L760 33M1060 160L1250 33M1480 33L1560 280"/>
                <path class="w5" d="M950 440L1200 400 1568 360M1090 600L1568 560M1140 830L1390 780 1540 760M1190 900L1240 870 1330 910 1540 880 1540 760 1568 760M0 1000L30 1015 380 720M580 540L800 1060 900 1040 960 1080M0 1350L500 860M180 700L650 1330M360 780L480 1330M1430 850L1450 1100 1568 1230M790 1040L840 1110M700 1100L640 1330M160 950L330 1360"/>
              </g>
              <g class="roads" transform="translate(1760 1440) scale(.5102 .33333)">
                <path class="w6" d="M-10 830L140 670 230 600 440 420 650 200M700 0L800 320 860 600 940 650 1100 680 1270 670 1568 620M270 600L340 880 480 1330"/>
                <path class="w5" d="M0 160L100 70 200 0M440 200L600 770 770 1170M100 870L180 720 220 730 300 870 460 880 540 790 660 740 700 640 690 500 660 350 670 200 620 60M100 870L70 1000 120 1100 115 1330M255 1330L250 1050 330 930 460 900 540 810 670 760 720 680"/>
                <path class="w5" d="M1240 40L1180 200 1110 370 1100 650 1110 780 1100 1050 1080 1150 1090 1330M1190 20L1240 40 1400 40 1568 90M900 970L1200 930 1500 880 1568 910M1100 1140L1568 1110M870 1260L1240 1240 1568 1220M400 1080L720 830M730 680L720 1200M1440 650L1400 830M40 0L120 660 220 1000M1000 190L990 500M170 300L270 600M330 0L650 250M200 0L260 250M1200 320L1200 150 1310 100M820 470L760 760M850 560L940 440M990 190L1060 190"/>
              </g>
              <g class="roads" transform="translate(2540 1000) scale(.5102 .5867)">
                <path class="w6" d="M135 20L170 110 240 190 320 260 350 330M0 490L180 400 350 320 600 190 720 130 800 100M-10 170L40 290 100 420 170 540 200 620 270 780 340 910 400 1050M340 910L510 820 660 740 850 650 1050 560 1240 470 1393 400M820 230L950 350 1040 560M380 1520L560 1400 780 1290 1090 1150 1280 1070 1393 1320"/>
                <path class="w5" d="M1240 470L1330 525 1393 522M780 1290L830 1400 860 1500M820 1400L880 1390 1010 1480M-10 785L160 850 230 910 240 990 400 1060M60 720L230 780 300 770M-20 1010L180 990 400 1070M400 1060L450 1110 600 1180 780 1290M-10 1420L170 1390 400 1400 470 1430M80 1140L170 1390 210 1500M690 20L720 70M880 50L930 20"/>
                <path class="w4" d="M500 530L640 750M370 630L390 845 580 780 720 800 840 1100 930 1210M620 940L770 910M400 1060L490 1030 560 1040 700 1160 840 1230M420 490L640 570 830 630M270 540L300 640 370 630M800 1050L860 1030M1330 1205L1393 1205M1060 560L1100 520M540 870L620 1010M700 440L900 640M720 340L780 480M320 190L330 120 480 70"/>
              </g>

              <!-- highways -->
              <g class="ramp-edge"><g id="ramps"><path d="M1163 1055Q1190 1040 1200 1070L1215 1087M1160 1096Q1140 1130 1180 1132L1188 1126M1115 1105Q1140 1104 1160 1130M1318 1083Q1295 1095 1303 1105M1315 1117Q1308 1140 1333 1134M1370 1083L1396 1110 1415 1142M1760 1030L1775 1022M1930 1065L1935 1085M1980 1045L2056 1180M2380 1325L2388 1370 2365 1443 2346 1470 2306 1480 2291 1495 2285 1557 2260 1625 2234 1657 2229 1707 2209 1757 2178 1800 2148 1833 2107 1860 2081 1884M2168 1800L2163 1827 2137 1850M2380 1323Q2400 1320 2400 1340L2390 1355M2160 1370L2173 1380 2165 1410M2185 1380L2200 1410M2718 1193L2760 1252 2795 1270M2805 1258L2836 1235 2850 1212M2995 1110L2989 1146 2965 1140M2879 1430L2882 1400 2943 1405 2943 1422M2620 1310Q2625 1290 2645 1307M3081 1616L3125 1650 3140 1650M3098 1640Q3060 1660 3075 1690L3105 1700M3105 1650L3140 1670 3110 1710M3100 1763L3115 1815 3165 1884M3120 1760L3150 1830 3200 1880Q3220 1860 3210 1884"/></g></g>
              <use href="#ramps" class="ramp-fill"/>
              <g class="hw">
                <g id="hw-main">
                  <path d="M998 1140L1097 1103 1148 1090 1261 1086 1317 1117 1403 1118 1465 1122 1574 1125M1523 1012L1521 1122M1606 1012L1577 1087 1574 1133 1574 1158"/>
                  <path d="M1454 1886L1505 1807 1531 1757 1572 1700 1628 1660 1679 1630 1780 1594 1862 1570 1928 1537 2015 1480 2143 1410 2209 1367 2250 1367 2270 1373 2367 1363 2418 1340 2560 1322 2673 1311 2744 1282"/>
                  <path d="M1758 1012L1913 1063 1939 1065 1954 1047M2744 1282L2785 1258 2856 1205 2994 1108M3070 1040L3106 1010"/>
                </g>
                <use href="#hw-main" class="hw-fill"/>
              </g>
              <g class="hw broad">
                <path id="hw-queensway" d="M2735 1285L2744 1282 2785 1266 2815 1268 2840 1284 2856 1310 2866 1350 2875 1378 2897 1408 2948 1428 2999 1452 3035 1499 3050 1563 3081 1616 3101 1675 3106 1763"/>
                <use href="#hw-queensway" class="hw-fill"/>
              </g>
              <path class="hw-mid" d="M2367 1363L2418 1340 2560 1322 2673 1311 2744 1282 2785 1266 2815 1268 2840 1284 2856 1310 2866 1350 2875 1378 2897 1408 2948 1428 2999 1452 3035 1499 3050 1563 3081 1616 3101 1675 3106 1763M2744 1282L2785 1258 2856 1205 2994 1108"/>

              <!-- area names -->
              <g class="area">
                <text x="1279" y="1018" textLength="179">LAC-DES-FÉES</text><text x="1234" y="1208" textLength="341">JARDINS-MACKENZIE-KING</text><text x="1055" y="1242" textLength="180">BIRCH MANOR</text><text x="1301" y="1340" textLength="173">VAL-TÉTREAU</text>
                <text x="1441" y="1660" textLength="166">FISHER PARK</text><text x="1313" y="1837" textLength="138">WESTBORO</text><text x="1714" y="1545" textLength="173">CENTRETOWN</text><text x="1766" y="1568" textLength="68">WEST</text>
                <text x="1949" y="1580" textLength="137">THE GLEBE</text><text x="1997" y="1749" textLength="166">OLD OTTAWA</text><text x="2037" y="1772" textLength="86">SOUTH</text><text x="2150" y="1875" textLength="150">ALTA VISTA</text>
                <text class="big" x="2303" y="1053" textLength="108">VANIER</text><text x="2311" y="1103" textLength="188">VANIER SOUTH</text><text x="1934" y="1127" textLength="170">LOWER TOWN</text><text x="1942" y="1174" textLength="106">BYWARD</text><text x="1943" y="1197" textLength="103">MARKET</text><text x="2355" y="1245" textLength="152">OVERBROOK</text>
                <text x="2665" y="1031" textLength="128">MEADOWS</text><text x="2897" y="1265" textLength="122">PINEVIEW</text><text x="2560" y="1641" textLength="133">ELMVALE -</text><text x="2558" y="1664" textLength="138">EASTWAY -</text><text x="2563" y="1688" textLength="137">RIVERVIEW</text><text x="2552" y="1711" textLength="156">- RIVERVIEW</text><text x="2559" y="1735" textLength="144">PARK WEST</text>
                <text x="2754" y="1681" textLength="209">SHEFFIELD GLEN</text><text x="2665" y="1786" textLength="151">URBANDALE</text><text x="2883" y="1813" textLength="177">RAMSAYVILLE</text><text x="993" y="1031">J</text>
                <text class="big" transform="translate(1181 1544) rotate(-53)" textLength="98">QUEBEC</text><text class="big" transform="translate(1206 1566) rotate(-55)" textLength="114">ONTARIO</text>
              </g>
              <g class="road-name">
                <text transform="translate(1660 1140) rotate(86)" textLength="63">Eddy St</text><text transform="translate(1695 1254) rotate(-17)" textLength="76">Laurier St</text><text transform="translate(1345 1552) rotate(-28)" textLength="130">Kichi Zībī Mikan</text>
                <text transform="translate(1477 1608) rotate(-33)" textLength="70">Scott St</text><text transform="translate(1309 1710) rotate(-33)" textLength="70">Scott St</text><text transform="translate(1018 1599) rotate(-46)" textLength="126">Bd de Lucerne</text>
                <text transform="translate(1211 1851) rotate(75)">Broadview</text><text transform="translate(1124 1888) rotate(-50)">kan</text><text transform="translate(2103 1537) rotate(74)" textLength="112">Colonel By Dr</text><text transform="translate(2327 1790) rotate(-87)" textLength="103">Alta Vista Dr</text>
                <text transform="translate(2384 1754) rotate(-6)" textLength="145">Pleasant Park Rd</text><text transform="translate(2382 1858) rotate(-6)" textLength="97">Kilborn Ave</text><text transform="translate(2308 1861) rotate(86)">Alta</text>
              </g>
              <g class="poi">
                <g class="green"><text x="1148" y="1025" textLength="107">Gatineau</text><text x="997" y="1369" textLength="127">a Golf Club</text><text x="982" y="1405" textLength="56">Club</text><text x="1423" y="1456" textLength="224">Remic Rapids Park</text><text x="1066" y="1689" textLength="115">Westboro</text><text x="1107" y="1716" textLength="74">Beach</text><text x="1948" y="1653" textLength="107">TD Place</text><text x="2131" y="1184" textLength="131">Strathcona</text><text x="2171" y="1211" textLength="53">Park</text><text x="2518" y="1133" textLength="234">Cosmic Adventures</text><text x="3053" y="1173">Pine View Golf C</text></g>
                <g class="teal"><text x="1469" y="1304" textLength="279">Canadian War Museum</text><text x="996" y="1076">au</text><text x="1691" y="1137" textLength="189">National Gallery</text><text x="1761" y="1164" textLength="121">of Canada</text><text x="1552" y="1832" textLength="228">Canada Agriculture</text><text x="1556" y="1859" textLength="223">and Food Museum</text><text x="1773" y="1407" textLength="225">Canadian Museum</text><text x="1886" y="1434" textLength="112">of Nature</text><text x="2538" y="1556" textLength="244">Canada Science and</text><text x="2532" y="1583" textLength="250">Technology Museum</text></g>
                <g class="blue"><text x="1104" y="1768" textLength="148">MEC Ottawa</text><text x="2399" y="1186" textLength="176">Adonis Ottawa</text><text x="2252" y="1368" textLength="254">Walmart Supercentre</text><text x="2608" y="1260" textLength="129">St. Laurent</text><text x="2608" y="1288" textLength="199">Shopping Centre</text><text x="2576" y="1422" textLength="55">SAIL</text><text x="3007" y="1384" textLength="265">Costco Business Cent</text><text x="2771" y="1752" textLength="131">Giant Tiger</text><text x="2733" y="1878" textLength="167">Princess Auto</text></g>
                <g class="hosp"><text x="1382" y="1727" textLength="244">The Ottawa Hospital</text><text x="1463" y="1755" textLength="163">Civic Campus</text><text x="2195" y="1586" textLength="245">The Ottawa Hospital</text><text x="2241" y="1613" textLength="199">General Campus</text></g>
                <g class="slate"><text x="2025" y="1302" textLength="117">University</text><text x="2026" y="1329" textLength="116">of Ottawa</text></g>
                <text class="food" x="3021" y="1689" textLength="201">Shinka Sushi Bar</text>
                <g class="black"><text x="2875" y="1053">Be</text><text x="2853" y="1080">Hill-O</text><text x="2889" y="1107">W</text></g>
              </g>
              <text class="city" x="1846" y="1313" textLength="159">Ottawa</text>

              <!-- shields -->
              <g class="shields">
                <g transform="translate(1739 1407)"><use href="#sh-county"/><text>77</text></g><g transform="translate(1697 1468)"><use href="#sh-county"/><text>40</text></g><g transform="translate(1399 1791)"><use href="#sh-county"/><text>67</text></g><g transform="translate(1654 1782)"><use href="#sh-county"/><text>38</text></g><g transform="translate(1675 1637)"><use href="#sh-prov"/><text>417</text></g>
                <g transform="translate(1938 1008)"><use href="#sh-county"/><text>93</text></g><g transform="translate(2200 1038)"><use href="#sh-county"/><text>19</text></g><g transform="translate(2076 1061)"><use href="#sh-county"/><text>44</text></g><g transform="translate(2284 1084)"><use href="#sh-county"/><text>34</text></g><g transform="translate(2106 1149)"><use href="#sh-county"/><text>34</text></g><g transform="translate(2358 1136)"><use href="#sh-county"/><text>68</text></g>
                <g transform="translate(1857 1341)"><use href="#sh-county"/><text>42</text></g><g transform="translate(1903 1340)"><use href="#sh-county"/><text>31</text></g><g transform="translate(2002 1353)"><use href="#sh-county"/><text>91</text></g><g transform="translate(2452 1301)"><use href="#sh-county"/><text>50</text></g><g transform="translate(2121 1425)"><use href="#sh-prov"/><text>417</text></g>
                <g transform="translate(1825 1462)"><use href="#sh-county"/><text>36</text></g><g transform="translate(1912 1465)"><use href="#sh-county"/><text>81</text></g><g transform="translate(2420 1457)"><use href="#sh-county"/><text>30</text></g><g transform="translate(2149 1517)"><use href="#sh-county"/><text>72</text></g><g transform="translate(1896 1624)"><use href="#sh-county"/><text>79</text></g><g transform="translate(2250 1637)"><use href="#sh-county"/><text>19</text></g><g transform="translate(2305 1661)"><use href="#sh-county"/><text>72</text></g><g transform="translate(1799 1748)"><use href="#sh-county"/><text>73</text></g><g transform="translate(2202 1758)"><use href="#sh-county"/><text>19</text></g>
                <g transform="translate(2894 1178)"><path d="M-19 -12.500H19L16 12.500H-16Z"/><text>174</text></g><g transform="translate(3235 1238)"><use href="#sh-county"/><text>30</text></g><g transform="translate(3121 1302)"><use href="#sh-county"/><text>27</text></g><g transform="translate(2635 1344)"><use href="#sh-county"/><text>26</text></g><g transform="translate(3054 1551)"><use href="#sh-prov"/><text>417</text></g><g transform="translate(3099 1733)"><use href="#sh-prov"/><text>417</text></g><g transform="translate(2982 1737)"><use href="#sh-county"/><text>74</text></g><g transform="translate(3068 1880)"><use href="#sh-county"/><text>26</text></g>
                <g class="a5" transform="translate(1967 1051)"><path d="M-19 -13H19V9Q8 9 0 13Q-8 9 -19 9Z"/><text>A. 5</text></g>
                <g class="q148" transform="translate(1059 1121)"><path d="M-19 -13H19V7L0 14L-19 7Z"/><text>148</text></g>
              </g>

              <!-- place pins -->
              <g class="pins">
                <g transform="translate(1704 1368)" class="p-teal"><use href="#pin"/><use href="#g-museum"/></g>
                <g transform="translate(1805 1863)" class="p-teal"><use href="#pin"/><use href="#g-museum"/></g>
                <g transform="translate(2022 1438)" class="p-teal"><use href="#pin"/><use href="#g-museum"/></g>
                <g transform="translate(2808 1587)" class="p-teal"><use href="#pin"/><use href="#g-museum"/></g>
                <g transform="translate(1907 1168)" class="p-teal"><use href="#pin"/><path d="M0 -48A11 10.500 0 1 0 0 -27Q5 -29 2 -33Q2 -36 8 -35Q12 -37 11 -40A11 10 0 0 0 0 -48Z" fill="#fff" stroke="none"/><circle cx="-6" cy="-35" r="1.600"/><circle cx="-5" cy="-41" r="1.600"/><circle cx="0" cy="-44.500" r="1.600"/><circle cx="5.500" cy="-41" r="1.600"/></g>
                <g transform="translate(1149 1387)" class="p-green"><use href="#pin"/><use href="#g-golf"/></g>
                <g transform="translate(994 1472)" class="p-green"><use href="#pin"/><use href="#g-golf"/></g>
                <g transform="translate(3028 1190)" class="p-green"><use href="#pin"/><use href="#g-golf"/></g>
                <g transform="translate(1398 1475)" class="p-green"><use href="#pin"/><use href="#g-tree"/></g>
                <g transform="translate(1205 1720)" class="p-green"><use href="#pin"/><path d="M-7 -43Q2 -51 9 -45Q14 -38 10 -31Q8 -41 -7 -43Z" fill="#fff" stroke="#fff"/><path d="M3 -39L-8 -27M-7 -34L1 -28" stroke="#fff" stroke-width="2.800"/><circle cx="-10" cy="-40" r="2.500" fill="#fff" stroke="none"/></g>
                <g transform="translate(2079 1670)" class="p-green"><use href="#pin"/><path d="M-12 -38Q-4 -44 0 -35Q6 -40 12 -38Q13 -26 0 -25Q-12 -27 -12 -38Z" fill="#fff" stroke="none"/><path d="M-7 -41V-47L-2 -45M7 -41V-47L12 -45" fill="none" stroke="#fff" stroke-width="2"/></g>
                <g transform="translate(2777 1150)" class="p-green"><use href="#pin"/><circle cx="0" cy="-35" r="6" fill="#fff" stroke="none"/></g>
                <g transform="translate(1276 1786)" class="p-blue"><use href="#pin"/><use href="#g-bag"/></g>
                <g transform="translate(2462 1433)" class="p-blue"><use href="#pin"/><use href="#g-bag"/></g>
                <g transform="translate(2551 1440)" class="p-blue"><use href="#pin"/><use href="#g-bag"/></g>
                <g transform="translate(2583 1291)" class="p-blue"><use href="#pin"/><use href="#g-bag"/></g>
                <g transform="translate(2983 1402)" class="p-blue"><use href="#pin"/><use href="#g-bag"/></g>
                <g transform="translate(2926 1769)" class="p-blue"><use href="#pin"/><use href="#g-bag"/></g>
                <g transform="translate(2925 1894)" class="p-blue"><use href="#pin"/><use href="#g-bag"/></g>
                <g transform="translate(2600 1203)" class="p-blue"><use href="#pin"/><path d="M-12 -46H-8L-3 -35L-5 -31H9" fill="none" stroke="#fff" stroke-width="2.400"/><path d="M-6 -43H12L8 -36H-3Z" fill="#fff" stroke="none"/><circle cx="-3" cy="-27" r="2" fill="#fff" stroke="none"/><circle cx="7" cy="-27" r="2" fill="#fff" stroke="none"/></g>
                <g transform="translate(1650 1760)" class="p-red"><use href="#pin"/><use href="#g-hosp"/></g>
                <g transform="translate(2464 1617)" class="p-red"><use href="#pin"/><use href="#g-hosp"/></g>
                <g transform="translate(2084 1273)" class="p-slate"><use href="#pin"/><path d="M-13 -40L0 -47L13 -40L0 -33ZM-8 -35L0 -30L8 -35V-31L0 -26L-8 -31ZM11 -40h2v9h-2z" fill="#fff" stroke="none"/></g>
                <g transform="translate(2996 1706)" class="p-orange"><use href="#pin"/><path d="M-10 -48V-41M-6 -48V-26M-2 -48V-41M-10 -41H-2M6 -26V-47" fill="none" stroke="#fff" stroke-width="2.600"/><path d="M6 -48Q1 -44 2 -36H7Z" fill="#fff" stroke="none"/></g>
              </g>

              <!-- trip route -->
              <g class="route">
                <path d="M2268 1450L2300 1443" stroke="#a01f4e"/><path d="M2278 1464L2300 1450" stroke="#115b96"/>
                <path d="M1995 1218L2004 1211 2015 1208 2030 1217 2046 1260 2061 1283 2117 1332 2168 1345 2219 1370 2240 1390 2260 1447" stroke="#cb3139"/>
                <path d="M2297 1450L2296 1507 2291 1573 2265 1630 2234 1700 2232 1727 2244 1740 2240 1770 2219 1810 2183 1853 2160 1886M1982 1886L2008 1878" stroke="#115b96"/>
                <use href="#i-stop" x="1965" y="1207" width="36" height="36"/><use href="#i-stop" x="2248" y="1430" width="36" height="36"/><use href="#i-stop" x="2282" y="1425" width="36" height="36"/><use href="#i-stop" x="1938" y="1866" width="36" height="36"/>
                <rect x="2115" y="1326" width="55" height="35" rx="4" fill="#cb3139"/><use href="#i-train" x="2122" y="1330" width="26" height="29" fill="#fff"/><text x="2152" y="1351">1</text>
                <rect x="2161" y="1837" width="69" height="35" rx="4" fill="#115b96"/><use href="#i-bus" x="2168" y="1842" width="27" height="28" fill="#fff"/><text x="2199" y="1862">10</text>
                <path class="dark-pin" d="M1984 1230C1981 1212 1962 1206 1962 1190A22 22 0 0 1 2006 1190C2006 1206 1987 1212 1984 1230Z"/><text class="big-letter" x="1984" y="1202">A</text>
                <path class="dark-pin" d="M1939 1877C1936 1859 1916 1853 1916 1837A23 22.500 0 0 1 1962 1837C1962 1853 1942 1859 1939 1877Z"/><text class="big-letter" x="1940" y="1847">B</text>
              </g>
            </svg>
            <a class="expand"><svg width="54" height="52" viewBox="0 0 54 52"><path d="M52 2V21L46 16 34 27 28 21 40 10 34 2ZM2 50V31L8 36 20 25 26 31 14 42 20 50Z" fill="none" stroke="#fff" stroke-width="3"/></svg></a>
            <div class="map-type"><b>Map</b><span>Satellite</span></div>
            <a class="full"><svg width="34" height="36" viewBox="0 0 34 36"><path d="M2.500 12V2.500H12M22 2.500H31.500V12M31.500 24V33.500H22M12 33.500H2.500V24" fill="none" stroke="#666" stroke-width="5"/></svg></a>
          </section>
        </div>
      </main>
    </div>
  </div>
</div>

<div class="stand">
  <div class="neck"></div>
  <svg class="foot" width="842" height="125" viewBox="0 0 842 125">
    <path d="M21 0H821L840 64Q838 68 820 70H22Q4 68 2 64Z" fill="url(#ledge)"/>
    <path d="M21 0H821L780 66H62Z" fill="url(#ledge-fade)"/>
    <rect x="18" y="106" width="808" height="13" rx="6" fill="#8a8a8a" class="soft"/>
    <path d="M2 64Q10 68 26 69H816Q832 68 840 64V104Q838 109 826 110H16Q4 109 2 104Z" fill="url(#metal)"/>
  </svg>
</div>
</body>
</html>
```
FILE: styles.css
```css
* { box-sizing: border-box; }
body { margin: 0; background: #fff; font-family: "Open Sans", sans-serif; color: #4a4a4a; }
.defs { position: absolute; }
.monitor { margin: 2px 2px 0; padding: 36px; height: 1918px; border-radius: 26px; background: #1b1b1b; }
.screen { height: 1846px; background: #fff; overflow: hidden; }

/* header */
.header { position: relative; height: 310px; box-shadow: 0 4px 28px rgba(0,0,0,.16); }
.logo { position: absolute; left: 54px; top: 14px; width: 356px; height: 296px; }
.topbar { height: 125px; padding: 0 48px 9px 0; background: #2b2b2b; color: #fff; display: flex; justify-content: flex-end; align-items: center; font-size: 30.800px; font-weight: 600; }
.topbar a { line-height: 43px; }
.divided { border-right: 4px solid #fff; padding-right: 32px; margin-right: 34px; }
.presto { margin-right: 68px; }
.lang { margin-left: 28px; width: 74px; height: 64px; line-height: 62px !important; text-align: center; background: #0074a5; border-radius: 4px; font-weight: 700; font-size: 30px; }
.mainnav { height: 185px; padding: 0 79px 7px 0; display: flex; justify-content: flex-end; align-items: center; gap: 62px; font-size: 31.050px; font-weight: 700; color: #000; }

.page { display: flex; align-items: flex-start; }
.sidebar { position: relative; width: 195px; height: 779px; background: #f4f4f4; border-right: 7px solid #8b1517; display: flex; flex-direction: column; }
.side-item { flex: 1; display: flex; flex-direction: column; align-items: center; justify-content: center; text-align: center; color: #000; font-size: 22.900px; line-height: 29px; font-weight: 700; }
.side-item.active { background: #c60d18; color: #fff; flex: 0 0 194px; }
.side-item span { width: 150px; }
.side-item .nowrap { width: auto; white-space: nowrap; }
.red { fill: #b50000; }
.lifted { filter: drop-shadow(4px 3px 4px rgba(0,0,0,.5)); }
.ab { font: 700 21px "Liberation Sans", sans-serif; fill: #c60d18; text-anchor: middle; }

.main { flex: 1; padding: 77px 52px 0 59px; }
.titlebar { display: flex; width: 650px; height: 61px; margin: 0 0 19px 19px; border-radius: 6px; overflow: hidden; color: #fff; font-size: 23.300px; line-height: 29px; font-weight: 700; }
.change { width: 298px; padding: 0 0 6px 9px; background: #35a846; display: flex; align-items: center; gap: 9px; }
.tri { margin-top: 5px; border: 7px solid transparent; border-right: 11px solid #fff; border-left: 0; }
.plans { flex: 1; padding-right: 29px; background: #0074a5; text-align: right; }

.panel { background: #f4f4f4; border: 2px solid #bbb; border-radius: 6px; }
.results { height: 476px; padding: 31px 30px; }
.more { height: 40px; margin-bottom: 11px; padding: 0 5px 1px 0; background: #d8d8d8; border-radius: 6px; display: flex; justify-content: center; align-items: center; gap: 14px; font-size: 24px; font-weight: 600; }
.more path { fill: none; stroke: #555; stroke-width: 5; }
.later { margin: 10px 0 0; }
.trip { height: 103px; display: flex; align-items: center; border-bottom: 2px solid #e3e3e3; font-size: 23.800px; font-weight: 600; }
.trip.selected { height: 104px; padding-top: 4px; margin-bottom: -1px; background: #fdd211; border-color: #fdd211; }
.trip .arrow { width: 36px; margin: 0 21px 0 20px; }
.trip.selected .arrow { margin-top: -4px; }
.trip time { padding-top: 4px; }
.from { width: 124px; }
.to { padding-right: 20px; }
.track { flex: 1; display: flex; gap: 3px; }
.seg { flex: none; height: 62px; border-radius: 6px; color: #fff; font-size: 24px; font-weight: 700; display: flex; align-items: center; justify-content: center; gap: 12px; padding: 0 2px 3px 0; }
.seg svg { width: 26px; height: 33px; fill: #fff; }
.seg.walk svg { width: 20px; height: 28px; margin-top: 4px; }
.walk { background: repeating-linear-gradient(45deg, #5189e1 0 25px, #2a72e3 25px 50px); }
.wait { background: repeating-linear-gradient(45deg, #e3e3e3 0 25px, #f4f4f4 25px 50px); border-radius: 0; }
.r1 { background: #cb3139; }
.r2 { background: #77be43; }
.r10 { background: #115b96; }

.lower { display: flex; gap: 29px; margin-top: 30px; margin-right: -2px; }
.itinerary { flex: none; width: 677px; height: 900px; padding: 27px 48px 0 48px; }
.date { text-align: right; font-size: 30.900px; line-height: 41px; white-space: nowrap; }
.summary { display: flex; justify-content: space-between; height: 106px; }
.duration { display: flex; flex-direction: column; padding-top: 1px; }
.duration strong { font-weight: 400; font-size: 33px; line-height: 41px; }
.duration span { font-size: 27.100px; line-height: 36px; }
.print { width: 65px; height: 58px; margin-top: 8px; background: #4a4a4a; border-radius: 5px; display: flex; align-items: center; justify-content: center; }
.steps { list-style: none; margin: 0; padding: 0; font-size: 23.200px; line-height: 29px; }
.step { position: relative; display: grid; grid-template-columns: 106px 70px 1fr; }
.step time, .step h3, .mode b { font-weight: 600; font-size: 23.750px; }
.s1 { height: 175px; } .s2 { height: 177px; } .s3 { height: 174px; } .s4 { height: 180px; }
.step time { padding-left: 36px; }
.step h3 { margin: 0; white-space: nowrap; }
.step p { position: relative; margin: 20px 0 0; color: #555; }
.stop { display: block; width: 141px; margin-top: 13px; height: 30px; font-size: 22.200px; line-height: 28px; white-space: nowrap; color: #256fe0; border-bottom: 2px solid #c9c0b4; }
.stop + p { margin-top: 19px; }
.rail { display: flex; flex-direction: column; align-items: center; width: 58px; }
.node { margin-top: -3px; }
.node-letter { font: 700 16px "Liberation Sans", sans-serif; fill: #fff; text-anchor: middle; }
.dots { width: 9px; height: 134px; margin-top: 4px; background: radial-gradient(circle at 4.500px 7.450px, #256fe0 4.200px, transparent 4.900px) 0 0 / 9px 14.900px; }
.line { width: 8px; height: 127px; margin-top: 9px; }
.l1 { background: #cb3139; }
.l10 { background: #115b96; }
.plus { position: absolute; left: 318px; top: 7px; fill: #888; }
.warn { position: absolute; left: 358px; top: 0; }
.warn text { font-size: 25px; font-weight: 600; fill: #444; text-anchor: middle; }
.mode { position: absolute; left: 65px; top: 80px; width: 0; display: flex; flex-direction: column; align-items: center; fill: #beb5a8; }
.mode svg { flex: none; }
.mode b { line-height: 20px; margin-top: -4px; }
.s2 .mode { top: 45px; } .s4 .mode { top: 47px; }
.s4 .mode b { margin-top: -5px; }

/* map */
.map { position: relative; flex: 1; height: 900px; border: 2px solid #bbb; border-right-width: 1px; border-left-width: 1px; border-radius: 4px; overflow: hidden; font-family: Roboto, sans-serif; }
.canvas { display: block; }
.expand { position: absolute; left: 29px; top: 28px; width: 68px; height: 67px; border-radius: 5px; background: #454545; display: flex; align-items: center; justify-content: center; }
.map-type { position: absolute; right: 20px; top: 17px; display: flex; width: 324px; height: 78px; line-height: 80px; background: #fff; border-radius: 4px; box-shadow: 0 1px 5px rgba(0,0,0,.3); font-size: 34.700px; text-align: center; color: #565656; }
.map-type b { width: 133px; font-weight: 500; color: #000; border-right: 2px solid #e6e6e6; }
.map-type span { flex: 1; }
.full { position: absolute; right: 20px; top: 135px; width: 78px; height: 78px; background: #fff; border-radius: 4px; box-shadow: 0 1px 5px rgba(0,0,0,.3); display: flex; align-items: center; justify-content: center; }
.lg { fill: #d0e6da; } .lg2 { fill: #cddcd5; } .dg { fill: #a7dab5; }
.sand { fill: #f1e9d8; } .sand2 { fill: #ecdcc4; } .yel { fill: #fdf5da; } .pink { fill: #fde5e3; } .grey2 { fill: #dfe0e4; }
.water { fill: #9bbffa; }
.creek, .river, .canal { fill: none; stroke: #9bbffa; stroke-linejoin: round; vector-effect: non-scaling-stroke; stroke-width: 2.500px; }
.river { stroke-width: 20px; } .canal { stroke-width: 9px; } .wide { stroke-width: 6px; } .wide2 { stroke-width: 4px; }
.rail-lines path { fill: none; stroke: #d3d4d8; stroke-width: 2px; }
.borderline path { fill: none; stroke: #6c7684; stroke-width: 2px; stroke-dasharray: 5 4; }
.roads path { fill: none; stroke: #fff; stroke-linejoin: round; stroke-linecap: round; vector-effect: non-scaling-stroke; }
.roads .w4 { stroke-width: 3px; } .roads .w5 { stroke-width: 4px; } .roads .w6 { stroke-width: 6px; } .roads .w7 { stroke-width: 7px; } .roads .w8 { stroke-width: 8px; }
.hw { fill: none; stroke: #fba70f; stroke-width: 15px; stroke-linejoin: round; }
.hw-fill { stroke: #ffeec0; stroke-width: 10px; }
.broad { stroke-width: 19px; }
.broad .hw-fill { stroke-width: 14px; }
.hw-mid { fill: none; stroke: #fba70f; stroke-width: 2.500px; stroke-linejoin: round; }
.ramp-edge { fill: none; stroke: #fba70f; stroke-width: 8px; stroke-linejoin: round; }
.ramp-fill { fill: none; stroke: #ffeec0; stroke-width: 4px; stroke-linejoin: round; }
.canvas text { paint-order: stroke; stroke: #fff; stroke-width: 4px; stroke-linejoin: round; }
.area { font-size: 22.500px; font-weight: 500; fill: #4a4e54; letter-spacing: 2px; }
.area .big { font-size: 26px; fill: #3a3d42; }
.road-name { font-size: 19px; fill: #55595f; }
.poi { font-size: 26px; }
.green { fill: #188038; } .teal { fill: #128a94; } .blue { fill: #1a73e8; } .hosp { fill: #d92b20; } .slate { fill: #5d7d8b; } .food { fill: #d56e0c; } .black { fill: #202124; }
.city { font-size: 50px; font-weight: 500; fill: #1b1c1e; }
.shields path, .shields use { fill: #fff; stroke: #6b6f75; stroke-width: 2.200px; }
.canvas .shields text { font-size: 19px; fill: #333; text-anchor: middle; transform: translateY(6.500px); stroke: none; }
.canvas .a5 path { fill: #3a79cb; stroke: none; } .canvas .q148 path { fill: #62a145; stroke: none; }
.canvas .a5 text, .canvas .q148 text { fill: #fff; font-weight: 700; }
.p-teal { fill: #12b5cb; stroke: #0e97a8; } .p-green { fill: #34a853; stroke: #1e8e3e; } .p-blue { fill: #5491f5; stroke: #3b7de8; } .p-red { fill: #ee675c; stroke: #d9493f; } .p-slate { fill: #78909c; stroke: #5f7884; } .p-orange { fill: #f29900; stroke: #e08c00; }
#g-museum path:first-child, #g-bag path:first-child, #g-hosp path, #g-tree path, #g-golf circle { stroke: none; }
.route path { fill: none; stroke-width: 11px; stroke-linejoin: round; }
.route .dark-pin { fill: #3d3d3d; stroke: none; }
.canvas .route text { font: 500 26px Roboto, sans-serif; fill: #fff; stroke: none; }
.canvas .route .big-letter { font: 700 33px "Liberation Sans", sans-serif; text-anchor: middle; }

/* stand */
.stand { width: 842px; margin: 0 auto; height: 853px; }
.neck { width: 800px; height: 728px; margin: 0 auto; border-radius: 0 0 10px 10px; background: linear-gradient(180deg, #c6c6c6 0, #bdbdbd 120px, #bfbfbf 400px, #c5c5c5 678px, #cbcbcb 690px, #c4c4c4 697px, #9e9e9e 708px, #989898 716px, #a8a8a8 728px); }
.foot { display: block; }
.soft { filter: blur(4px); }
```
